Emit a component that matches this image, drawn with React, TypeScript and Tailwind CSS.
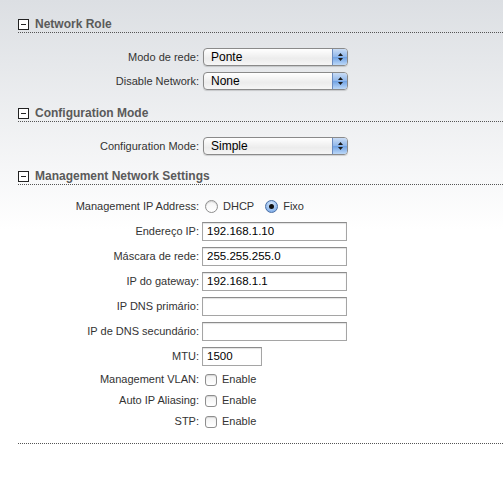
import React from "react"

const font = { fontFamily: '"Liberation Sans", Arial, sans-serif' }

function Header({ title, className = "" }: { title: string; className?: string }) {
  return (
    <div className={`flex h-[17px] items-center gap-[6px] border-b border-dotted border-[#555] ${className}`}>
      <div className="flex h-[11px] w-[11px] items-center justify-center border border-[#222] bg-white">
        <div className="h-px w-[5px] bg-[#222]" />
      </div>
      <span className="text-[12px] font-bold text-[#5a5a5a]">{title}</span>
    </div>
  )
}

function Row({ label, h = "h-[25px]", children }: { label: string; h?: string; children: React.ReactNode }) {
  return (
    <div className={`flex items-center ${h}`}>
      <div className="w-[184px] pr-[3px] text-right text-[11px] text-[#333]">{label}</div>
      <div className="flex items-center">{children}</div>
    </div>
  )
}

function Select({ value }: { value: string }) {
  return (
    <div className="ml-px flex h-[18px] w-[145px] overflow-hidden rounded-[4px] border border-[#8a8a8a] bg-[linear-gradient(to_bottom,#ffffff,#ececec_60%,#f6f6f6)] shadow-[0_1px_1px_rgba(0,0,0,0.15)]">
      <div className="flex-1 pl-[7px] text-[12px] leading-[16px] text-black">{value}</div>
      <div className="flex w-[15px] flex-col items-center justify-center gap-[2px] border-l border-[#6b8bbf] bg-[linear-gradient(to_bottom,#c9dcf5,#8fb6ea_50%,#6fa1e3_51%,#bcd8f8)]">
        <svg width="5" height="3" viewBox="0 0 5 3"><path d="M2.5 0 L5 3 L0 3 Z" fill="#1a1a1a" /></svg>
        <svg width="5" height="3" viewBox="0 0 5 3"><path d="M0 0 L5 0 L2.5 3 Z" fill="#1a1a1a" /></svg>
      </div>
    </div>
  )
}

function Input({ value = "", w = "w-[145px]" }: { value?: string; w?: string }) {
  return (
    <div className={`flex h-[19px] ${w} items-center border border-[#a5a5a5] border-t-[#8c8c8c] bg-white pl-[4px] text-[11.5px] text-black shadow-[inset_0_1px_1px_rgba(0,0,0,0.12)]`}>
      {value}
    </div>
  )
}

function Radio({ checked }: { checked?: boolean }) {
  return checked ? (
    <div className="flex h-[13px] w-[13px] items-center justify-center rounded-full border border-[#4a6fa5] bg-[radial-gradient(circle_at_50%_30%,#d7e8fb,#6fa3e6)]">
      <div className="h-[5px] w-[5px] rounded-full bg-[#111]" />
    </div>
  ) : (
    <div className="h-[13px] w-[13px] rounded-full border border-[#8e8e8e] bg-[linear-gradient(to_bottom,#f4f4f4,#ffffff)] shadow-[inset_0_1px_1px_rgba(0,0,0,0.15)]" />
  )
}

function Check() {
  return (
    <div className="flex items-center gap-[5px] text-[11px] text-[#333]">
      <div className="h-[12px] w-[12px] rounded-[3px] border border-[#8e8e8e] bg-[linear-gradient(to_bottom,#f2f2f2,#ffffff)] shadow-[inset_0_1px_1px_rgba(0,0,0,0.12)]" />
      <span>Enable</span>
    </div>
  )
}

export default function App() {
  return (
    <div
      style={font}
      className="h-[494px] w-full bg-[linear-gradient(to_bottom,#dcdfe3_0px,#ffffff_230px)] pl-[18px] pt-[16px]"
    >
      <Header title="Network Role" />
      <div className="mt-[12px]">
        <Row label="Modo de rede:" h="h-[24px]">
          <Select value="Ponte" />
        </Row>
        <Row label="Disable Network:" h="h-[24px]">
          <Select value="None" />
        </Row>
      </div>

      <Header title="Configuration Mode" className="mt-[12px]" />
      <div className="mt-[12px]">
        <Row label="Configuration Mode:" h="h-[24px]">
          <Select value="Simple" />
        </Row>
      </div>

      <Header title="Management Network Settings" className="mt-[10px]" />
      <div className="mt-[9px]">
        <Row label="Management IP Address:">
          <div className="flex items-center gap-[5px] pl-[3px] text-[11px] text-[#333]">
            <Radio />
            <span className="mr-[6px]">DHCP</span>
            <Radio checked />
            <span>Fixo</span>
          </div>
        </Row>
        <Row label="Endereço IP:">
          <Input value="192.168.1.10" />
        </Row>
        <Row label="Máscara de rede:">
          <Input value="255.255.255.0" />
        </Row>
        <Row label="IP do gateway:">
          <Input value="192.168.1.1" />
        </Row>
        <Row label="IP DNS primário:">
          <Input />
        </Row>
        <Row label="IP de DNS secundário:">
          <Input />
        </Row>
        <Row label="MTU:">
          <Input value="1500" w="w-[60px]" />
        </Row>
        <Row label="Management VLAN:" h="h-[21px]">
          <div className="pl-[3px]"><Check /></div>
        </Row>
        <Row label="Auto IP Aliasing:" h="h-[21px]">
          <div className="pl-[3px]"><Check /></div>
        </Row>
        <Row label="STP:" h="h-[21px]">
          <div className="pl-[3px]"><Check /></div>
        </Row>
      </div>
      <div className="mt-[11px] border-b border-dotted border-[#555]" />
    </div>
  )
}
